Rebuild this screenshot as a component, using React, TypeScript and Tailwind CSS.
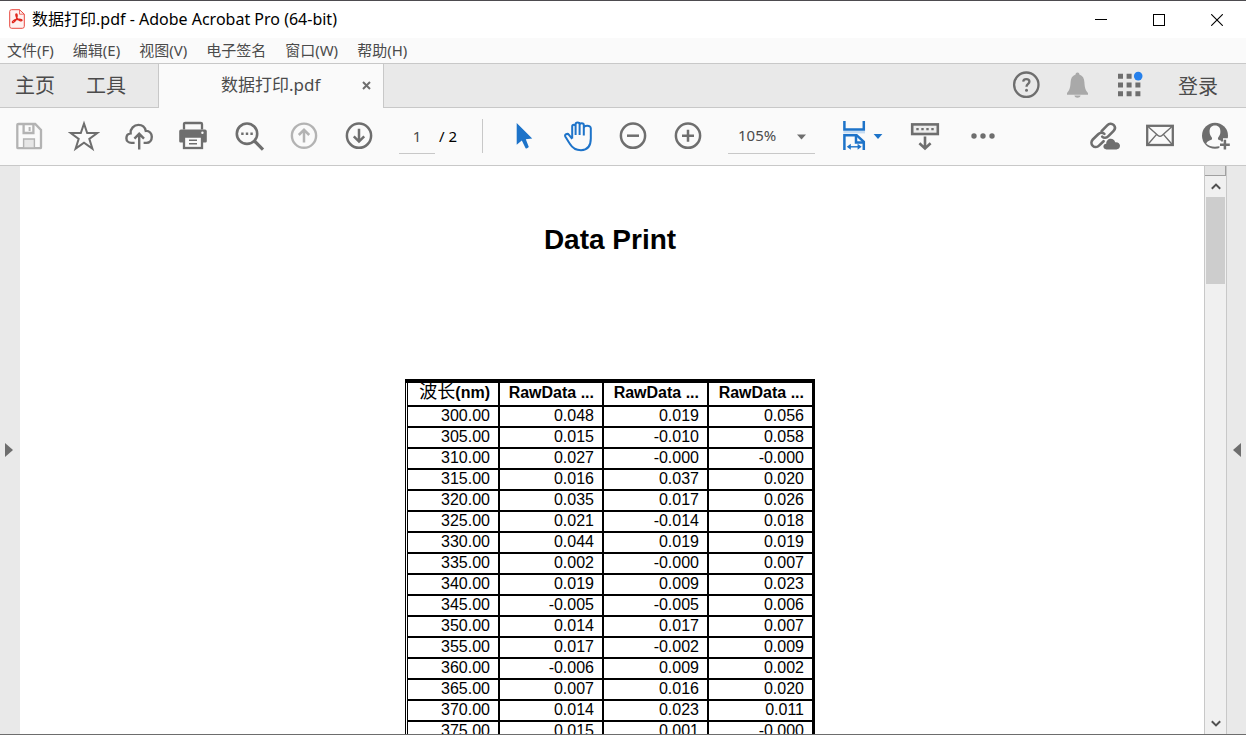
import React from "react";

const ROWS: string[][] = [
  ["300.00", "0.048", "0.019", "0.056"],
  ["305.00", "0.015", "-0.010", "0.058"],
  ["310.00", "0.027", "-0.000", "-0.000"],
  ["315.00", "0.016", "0.037", "0.020"],
  ["320.00", "0.035", "0.017", "0.026"],
  ["325.00", "0.021", "-0.014", "0.018"],
  ["330.00", "0.044", "0.019", "0.019"],
  ["335.00", "0.002", "-0.000", "0.007"],
  ["340.00", "0.019", "0.009", "0.023"],
  ["345.00", "-0.005", "-0.005", "0.006"],
  ["350.00", "0.014", "0.017", "0.007"],
  ["355.00", "0.017", "-0.002", "0.009"],
  ["360.00", "-0.006", "0.009", "0.002"],
  ["365.00", "0.007", "0.016", "0.020"],
  ["370.00", "0.014", "0.023", "0.011"],
  ["375.00", "0.015", "0.001", "-0.000"],
];

const MENUS = ["文件(F)", "编辑(E)", "视图(V)", "电子签名", "窗口(W)", "帮助(H)"];

type IconProps = { children: React.ReactNode; className?: string };

function Icon({ children, className = "text-[#6e6e6e]" }: IconProps) {
  return (
    <svg
      width="32"
      height="32"
      viewBox="0 0 32 32"
      fill="none"
      stroke="currentColor"
      strokeWidth="2.3"
      className={`shrink-0 ${className}`}
      aria-hidden="true"
    >
      {children}
    </svg>
  );
}

function Tool({ label, children, className }: { label: string } & IconProps) {
  return (
    <button type="button" aria-label={label} className="flex w-[54px] shrink-0 items-center justify-center">
      <Icon className={className}>{children}</Icon>
    </button>
  );
}

function TitleBar() {
  return (
    <header className="flex h-[38px] shrink-0 items-stretch border-t border-[#4d4b4f] bg-white">
      <div className="flex flex-1 items-center gap-[7px] pb-0.5 pl-[9px]">
        <svg width="16" height="20" viewBox="0 0 16 20" fill="none" aria-hidden="true">
          <path d="M2.5 0.7H10.5L15.3 5.2V17.3Q15.3 19.3 13.3 19.3H2.7Q0.7 19.3 0.7 17.3V2.5Q0.7 0.7 2.5 0.7Z" fill="#fff1f0" stroke="#e8483f" />
          <path d="M10.5 0.7V5.2H15.3" stroke="#e8483f" strokeWidth="0.8" />
          <path
            d="M7.4 4.8C6.4 4.8 6.8 7.2 8.2 9.4C9.6 11.6 12.4 12.4 13 11.4C13.5 10.3 10.5 9.8 7.6 10.5C5 11.1 2.9 12.4 3.4 13.4C4 14.5 6.4 12.2 7.6 9.4C8.4 7.4 8.4 4.8 7.4 4.8Z"
            stroke="#e0261c"
            strokeWidth="1.3"
          />
        </svg>
        <h1 className="text-base leading-5 text-black">数据打印.pdf - Adobe Acrobat Pro (64-bit)</h1>
      </div>
      <div className="flex text-black">
        <button type="button" aria-label="最小化" className="flex w-[58px] items-center justify-center">
          <svg width="12" height="12" viewBox="0 0 12 12" stroke="currentColor" shapeRendering="crispEdges">
            <path d="M0 5.5H12" />
          </svg>
        </button>
        <button type="button" aria-label="最大化" className="flex w-[58px] items-center justify-center">
          <svg width="12" height="12" viewBox="0 0 12 12" fill="none" stroke="currentColor" shapeRendering="crispEdges">
            <rect x="0.5" y="0.5" width="11" height="11" />
          </svg>
        </button>
        <button type="button" aria-label="关闭" className="flex w-[58px] items-center justify-center">
          <svg width="12" height="12" viewBox="0 0 12 12" stroke="currentColor" strokeWidth="1.1">
            <path d="M0.2 0.2L11.8 11.8M11.8 0.2L0.2 11.8" />
          </svg>
        </button>
      </div>
    </header>
  );
}

function MenuBar() {
  return (
    <nav aria-label="菜单" className="flex h-[25px] shrink-0 items-center gap-[19px] bg-[#fafafa] pb-0.5 pl-[7px] text-[15px] leading-5 text-[#4b4b4b]">
      {MENUS.map((m) => (
        <button type="button" key={m} className="whitespace-nowrap">
          {m}
        </button>
      ))}
    </nav>
  );
}

function TabBar() {
  return (
    <div className="flex h-[45px] shrink-0 border-t border-[#c8c8c8] bg-[#e9e9e9] text-[#4b4b4b]">
      <div className="flex w-[159px] items-center gap-[31px] border-r border-b border-[#c8c8c8] pl-[15px] text-xl">
        <button type="button">主页</button>
        <button type="button">工具</button>
      </div>
      <div className="flex w-[225px] items-center border-r border-[#c8c8c8] bg-[#fafafa] pb-0.5 pl-[62px]">
        <button type="button" className="flex-1 text-left text-[17px]">
          数据打印.pdf
        </button>
        <button type="button" aria-label="关闭标签页" className="mr-3">
          <svg width="9" height="9" viewBox="0 0 9 9" stroke="#6e6e6e" strokeWidth="2">
            <path d="M1 1L8 8M8 1L1 8" />
          </svg>
        </button>
      </div>
      <div className="flex flex-1 items-center justify-end gap-px border-b border-[#c8c8c8] pr-[28px]">
        <button type="button" aria-label="帮助" className="flex w-[50px] justify-center pb-0.5">
          <Icon>
            <circle cx="16.3" cy="15.7" r="12.2" />
            <path d="M13.2 12.6C13.4 11 14.7 10.2 16.3 10.2C18 10.2 19.4 11.1 19.4 12.7C19.4 14.9 16.5 15 16.5 17.8" />
            <circle cx="16.5" cy="21.2" r="1.5" fill="currentColor" stroke="none" />
          </Icon>
        </button>
        <button type="button" aria-label="通知" className="flex w-[50px] justify-center pb-0.5">
          <Icon className="text-[#a9a9a9]">
            <path
              d="M16.5 3.6C17.7 3.6 18.4 4.4 18.4 5.6C21.8 6.7 23.2 9.6 23.4 13.2C23.7 18.6 24.6 21.6 27 24V25.8H6V24C8.4 21.6 9.3 18.6 9.6 13.2C9.8 9.6 11.2 6.7 14.6 5.6C14.6 4.4 15.3 3.6 16.5 3.6ZM13.4 26.6H19.6C19.3 28 18 28.8 16.5 28.8C15 28.8 13.7 28 13.4 26.6Z"
              fill="currentColor"
              stroke="none"
            />
          </Icon>
        </button>
        <button type="button" aria-label="应用" className="flex w-[50px] justify-center pb-0.5">
          <Icon>
            <path d="M6 4.7h5v5h-5zM14.6 4.7h5v5h-5zM6 13.4h5v5h-5zM14.6 13.4h5v5h-5zM23.4 13.4h5v5h-5zM6 22.2h5v5h-5zM14.6 22.2h5v5h-5zM23.4 22.2h5v5h-5z" fill="currentColor" stroke="none" />
            <circle cx="26.2" cy="7.1" r="4.3" fill="#2680eb" stroke="none" />
          </Icon>
        </button>
        <button type="button" className="pt-0.5 pl-6 text-xl">
          登录
        </button>
      </div>
    </div>
  );
}

function Toolbar() {
  return (
    <div role="toolbar" className="flex h-[58px] shrink-0 items-stretch border-b border-[#c8c8c8] bg-[#fafafa] pb-px pl-[2px]">
      <div className="flex gap-px">
        <Tool label="保存" className="text-[#b3b3b3]">
          <path d="M5.5 4H22.2L28 10V27.5Q28 28.2 27.3 28.2H5.2Q4.3 28.2 4.3 27.5V4.8Q4.3 4 5.5 4Z" />
          <path d="M10.6 4V13H20.4V4" />
          <path d="M10.6 28V19H21.4V28Z" fill="#e6e6e6" strokeWidth="1.4" />
          <path d="M16.6 7V11" strokeWidth="2" />
        </Tool>
        <Tool label="收藏">
          <path d="M16 3.6L19.2 13H29.3L21.3 18.9L24.4 28.6L16 22.7L7.6 28.6L10.7 18.9L2.7 13H12.8Z" strokeWidth="2" />
        </Tool>
        <Tool label="上传">
          <path
            d="M11.6 22.9H8.4C5.4 22.9 3.4 20.7 3.4 18.2C3.4 15.6 5.3 13.7 7.6 13.4C7.2 8.6 11 4.9 15.4 4.9C19.3 4.9 22 7.4 22.8 10.9C26.4 10.7 28.8 13.4 28.8 16.8C28.8 20.2 26.6 22.9 23.4 22.9H20.6"
            strokeWidth="2.4"
          />
          <path d="M16.2 29.6V14.4M11.4 18.6L16.2 13.8L21 18.6" strokeWidth="2.4" />
        </Tool>
        <Tool label="打印">
          <path d="M6 9.5V4Q6 3 7.2 3H22.8Q24 3 24 4V9.5" />
          <path d="M3 9.4H27Q28.8 9.4 28.8 11.2V21.2Q28.8 22.6 27.4 22.6H24.6V17H5.4V22.6H2.6Q1.2 22.6 1.2 21.2V11.2Q1.2 9.4 3 9.4Z" fill="currentColor" stroke="none" />
          <rect x="6" y="16.6" width="18" height="11.4" />
          <path d="M11 20.3H19M11 23.8H19" strokeWidth="1.4" />
          <circle cx="24.4" cy="12.8" r="1.2" fill="#fafafa" stroke="none" />
        </Tool>
        <Tool label="查找">
          <circle cx="14" cy="13.7" r="10.2" strokeWidth="2.6" />
          <path d="M21.4 21L30 29.6" strokeWidth="3.2" />
          <path d="M8.2 12.6h2.4v2.4h-2.4zM12.8 12.6h2.4v2.4h-2.4zM17.4 12.6h2.4v2.4h-2.4z" fill="currentColor" stroke="none" />
        </Tool>
        <Tool label="上一页" className="text-[#b3b3b3]">
          <circle cx="16" cy="15.7" r="12.1" strokeWidth="2.4" />
          <path d="M16 22.6V10M10.8 15L16 9.8L21.2 15" strokeWidth="2.5" />
        </Tool>
        <Tool label="下一页">
          <circle cx="16" cy="15.7" r="12.1" strokeWidth="2.5" />
          <path d="M16 8.8V21.4M10.8 16.4L16 21.6L21.2 16.4" strokeWidth="2.5" />
        </Tool>
      </div>

      <div className="ml-[13px] flex items-end pb-[10px] text-[15px]">
        <input
          aria-label="页码"
          defaultValue="1"
          className="h-9 w-9 border-b border-[#c8c8c8] bg-transparent text-center text-[#4b4b4b] outline-none"
        />
        <span className="flex h-9 w-[34px] items-center pl-1 text-black">/ 2</span>
      </div>
      <div className="my-[11px] ml-[13px] w-px bg-[#c8c8c8]" />

      <div className="ml-[13px] flex gap-px">
        <Tool label="选择" className="text-[#1d73c9]">
          <path d="M9.7 3V24.8L14.8 20.6L18.6 28.2Q20 29 21.8 27L18.8 19.2L25.2 18.6Z" fill="currentColor" stroke="none" />
        </Tool>
        <Tool label="手形工具" className="text-[#1d73c9]">
          <path
            d="M10.2 18.6V6.6C10.2 4.2 13.6 4.2 13.6 6.6V15M13.6 15V4.4C13.6 2 17.6 2 17.6 4.4V15M17.6 15V5C17.6 2.6 21.8 2.6 21.8 5V15.6M21.8 15.6V8C21.8 5.4 28.8 4.8 28.8 8.2V18.6C28.8 26 25.4 30.2 19 30.2C13.4 30.2 10.4 28 8 24C6.6 21.8 4.6 18.8 3.4 16.8C2.2 14.6 5.4 12.8 7 14.8L10.2 18.8"
            strokeWidth="2"
            strokeLinejoin="round"
          />
        </Tool>
        <Tool label="缩小">
          <circle cx="16" cy="15.7" r="12.1" strokeWidth="2.5" />
          <path d="M10 15.7H22" strokeWidth="2.5" />
        </Tool>
        <Tool label="放大">
          <circle cx="16" cy="15.7" r="12.1" strokeWidth="2.5" />
          <path d="M10 15.7H22M16 9.7V21.7" strokeWidth="2.5" />
        </Tool>
      </div>

      <div className="ml-[13px] flex items-end pb-[10px]">
        <div className="relative">
          <select
            aria-label="缩放比例"
            defaultValue="105%"
            className="h-9 w-[87px] appearance-none border-b border-[#c8c8c8] bg-transparent pl-[10px] text-[15px] text-[#4b4b4b] outline-none"
          >
            <option>105%</option>
          </select>
          <svg width="9" height="6" viewBox="0 0 9 6" className="pointer-events-none absolute top-4 right-[9px]">
            <path d="M0 0.4H9L4.5 5.6Z" fill="#6e6e6e" />
          </svg>
        </div>
      </div>

      <button type="button" aria-label="适合宽度" className="ml-6 flex w-[54px] items-center text-[#1d73c9]">
        <svg width="44" height="32" viewBox="0 0 44 32" fill="none" stroke="currentColor" strokeWidth="2.5" className="ml-[3px] shrink-0">
          <rect x="1.4" y="10.8" width="21.6" height="2.6" fill="#c6dcf2" stroke="none" />
          <path d="M2.4 1V9.4H21.8V1" />
          <path d="M2.4 30V15.2H14.6L21.8 21.8V30" />
          <path d="M14 15V22.4H22" />
          <path d="M6.4 26.8H18" strokeWidth="1.4" />
          <path d="M8.8 23.8V29.8L4.8 26.8ZM15.6 23.8V29.8L19.6 26.8Z" fill="currentColor" stroke="none" />
          <path d="M31.6 14H40.4L36 19Z" fill="currentColor" stroke="none" />
        </svg>
      </button>
      <div className="ml-[5px] flex gap-1">
        <Tool label="扫描">
          <rect x="3.2" y="4.4" width="25.6" height="9.6" fill="#ededed" strokeWidth="2.6" />
          <path d="M7.3 7.9h2.4v2.4h-2.4zM12.3 7.9h2.4v2.4h-2.4zM17.3 7.9h2.4v2.4h-2.4zM22.3 7.9h2.4v2.4h-2.4z" fill="currentColor" stroke="none" />
          <path d="M16 16.4V28.4M10.4 23.2L16 28.4L21.6 23.2" strokeWidth="2.6" />
        </Tool>
        <Tool label="更多">
          <g fill="currentColor" stroke="none">
            <circle cx="7" cy="16" r="2.7" />
            <circle cx="16" cy="16" r="2.7" />
            <circle cx="25" cy="16" r="2.7" />
          </g>
        </Tool>
      </div>

      <div className="ml-auto flex gap-px pr-1">
        <Tool label="共享链接">
          <g strokeWidth="2.6" strokeLinecap="round">
            <path d="M12.6 11.2L18.2 5.4C20.2 3.3 22.8 3.2 24.6 4.9C26.4 6.7 26.2 9.2 24.4 11.1L19.4 16.2C17.4 18.2 14.8 18.2 13.2 16.6" />
            <path d="M14.6 21.2L10 25.6C8.2 27.4 5.4 27.4 3.8 25.8C2 24 2 21.4 3.8 19.5L9.2 14.2C11.2 12.3 13.8 12.4 15.4 13.9" />
          </g>
          <path d="M17.4 29.4C15.4 29.4 14.4 28 14.4 26.6C14.4 25 15.6 23.9 17.2 23.8C17.2 20.8 19.2 18.7 21.8 18.7C24 18.7 25.6 20 26.2 22.2C29 21.8 31 23.6 31 25.8C31 28 29.4 29.4 27.4 29.4Z" fill="currentColor" stroke="none" />
        </Tool>
        <Tool label="电子邮件">
          <rect x="3.2" y="5.8" width="25.6" height="19.2" />
          <path d="M3.4 6L14 15.4Q16 17.2 18 15.4L28.6 6M3.6 24.8L12.6 14.4M28.4 24.8L19.4 14.4" strokeWidth="1.4" />
        </Tool>
        <Tool label="添加人员">
          <circle cx="16" cy="15.8" r="13" fill="currentColor" stroke="none" />
          <path
            d="M16 5.6C19.6 5.6 21.6 8 21.4 12C21.3 14.4 20.4 16 19.2 17.4C18.6 18.4 19 19.6 20.2 20.1L22 20.8V26L16 26.8C12.6 26.8 9.4 25.8 7.2 23.6C8.2 21.4 10 20.8 11.8 20.1C13 19.6 13.4 18.4 12.8 17.4C11.6 16 10.7 14.4 10.6 12C10.4 8 12.4 5.6 16 5.6Z"
            fill="#fafafa"
            stroke="none"
          />
          <path d="M24 18.2H33V31H20.4V21.6H24Z" fill="#fafafa" stroke="none" />
          <path d="M25.9 19.8V29.6M21 24.7H30.8" strokeWidth="2.5" />
        </Tool>
      </div>
    </div>
  );
}

const HEAD_CELL = "h-[24px] border-r-2 border-b-2 border-black p-0 pr-2 pb-1 text-right font-bold whitespace-nowrap";

function DataTable() {
  return (
    <table className="mx-auto mt-[123px] border-separate border-spacing-0 border-t-4 border-r border-l border-black pl-px text-base leading-[17px] text-black">
      <thead>
        <tr>
          <th scope="col" className={`${HEAD_CELL} w-[93px] border-l`}>
            <span className="text-lg leading-[17px] font-normal">波长</span>(nm)
          </th>
          <th scope="col" className={`${HEAD_CELL} w-[104px]`}>RawData ...</th>
          <th scope="col" className={`${HEAD_CELL} w-[105px]`}>RawData ...</th>
          <th scope="col" className={`${HEAD_CELL} w-[105px]`}>RawData ...</th>
        </tr>
      </thead>
      <tbody>
        {ROWS.map((row) => (
          <tr key={row[0]}>
            {row.map((cell, i) => (
              <td key={i} className="h-[21px] border-r-2 border-b-2 border-black p-0 pr-2 pb-0.5 text-right first:border-l">
                {cell}
              </td>
            ))}
          </tr>
        ))}
      </tbody>
    </table>
  );
}

function Workspace() {
  return (
    <div className="flex min-h-0 flex-1">
      <button type="button" aria-label="展开左侧面板" className="flex w-5 shrink-0 items-center bg-[#e9e9e9] pl-[5px]">
        <svg width="8" height="14" viewBox="0 0 8 14">
          <path d="M0 0L8 7L0 14Z" fill="#6e6e6e" />
        </svg>
      </button>
      <main className="min-w-0 flex-1 overflow-hidden bg-white pt-[58px] pr-1 font-['Liberation_Sans','Noto_Sans_CJK_SC',sans-serif]">
        <h2 className="text-center text-[28px] leading-8 font-bold text-black">Data Print</h2>
        <DataTable />
      </main>
      <div className="flex w-[23px] shrink-0 flex-col border-r border-l border-[#c8c8c8] bg-[#f0f0f0]">
        <div className="h-[10px] border-r border-b border-[#a0a0a0] bg-[#e3e3e3]" />
        <button type="button" aria-label="向上滚动" className="flex h-[21px] items-center justify-center">
          <svg width="10" height="7" viewBox="0 0 10 7" fill="none" stroke="#505050" strokeWidth="2">
            <path d="M0.8 5.8L5 1.6L9.2 5.8" />
          </svg>
        </button>
        <div className="mx-px h-[87px] bg-[#cdcdcd]" />
        <button type="button" aria-label="向下滚动" className="mt-auto flex h-[21px] items-center justify-center">
          <svg width="10" height="7" viewBox="0 0 10 7" fill="none" stroke="#505050" strokeWidth="2">
            <path d="M0.8 1.2L5 5.4L9.2 1.2" />
          </svg>
        </button>
      </div>
      <button type="button" aria-label="展开右侧面板" className="flex w-[19px] shrink-0 items-center bg-[#e9e9e9] pl-[6px]">
        <svg width="8" height="14" viewBox="0 0 8 14">
          <path d="M8 0L0 7L8 14Z" fill="#6e6e6e" />
        </svg>
      </button>
    </div>
  );
}

export default function App() {
  return (
    <div className="flex h-screen flex-col overflow-hidden border-b border-[#6d6d6d] bg-white font-['Noto_Sans','Noto_Sans_CJK_SC',sans-serif]">
      <TitleBar />
      <MenuBar />
      <TabBar />
      <Toolbar />
      <Workspace />
    </div>
  );
}
